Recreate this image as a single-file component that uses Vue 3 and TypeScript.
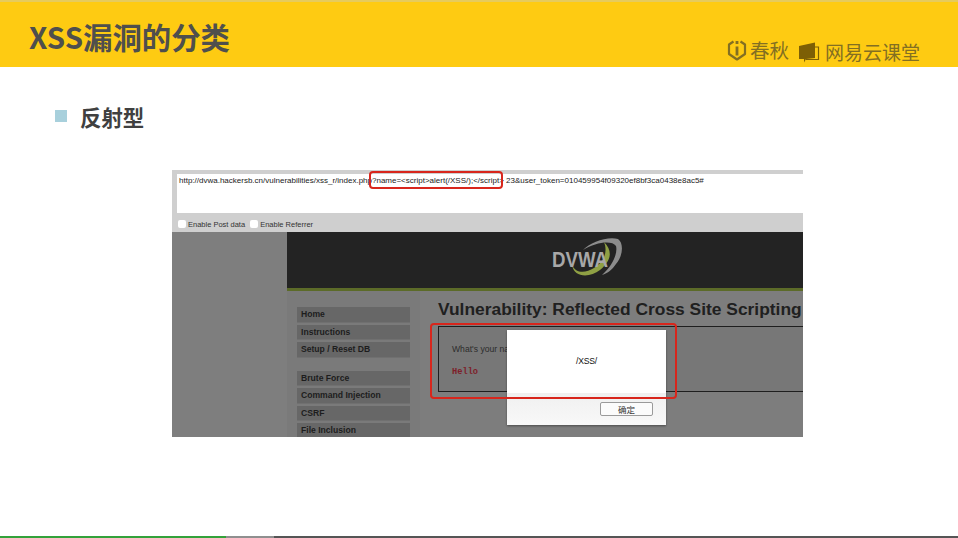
<template>
  <div class="slide">
    <header class="head">
      <h1 class="titulo">XSS漏洞的分类</h1>
      <div class="logos">
        <svg class="marca" width="20" height="22" viewBox="0 0 20 22">
          <path d="M6.5 2.5 L2 5.5 V15 L10 20.5 L18 15 V5.5 L13.5 2.5" fill="none" stroke="#836f22" stroke-width="2.2" stroke-linejoin="round" />
          <rect x="8.6" y="7.5" width="2.8" height="9" fill="#836f22" />
          <rect x="8.6" y="2" width="2.8" height="3" fill="#836f22" />
        </svg>
        <span class="chunqiu">春秋</span>
        <svg class="marca2" width="22" height="21" viewBox="0 0 22 21">
          <path d="M1 4 L17 0.5 V16 L8 17 L6 20.5 V17 L1 17 Z" fill="#7d5f05" />
          <path d="M17 5 H20.5 V17.5 H8" fill="none" stroke="#7d5f05" stroke-width="1.2" />
        </svg>
        <span class="netease">网易云课堂</span>
      </div>
    </header>

    <div class="item">
      <span class="bullet"></span>
      <span class="item-txt">反射型</span>
    </div>

    <section class="shot">
      <div class="url-wrap">
        <div class="url">http://dvwa.hackersb.cn/vulnerabilities/xss_r/index.php?name=&lt;script&gt;alert(/XSS/);&lt;/script&gt;&nbsp;23&amp;user_token=010459954f09320ef8bf3ca0438e8ac5#</div>
      </div>
      <div class="opts">
        <span class="check"></span><span>Enable Post data</span>
        <span class="check"></span><span>Enable Referrer</span>
      </div>

      <div class="page">
        <div class="gutter"></div>
        <div class="dvwa">
          <div class="banner">
            <svg class="dvwa-logo" width="90" height="56" viewBox="0 0 90 56">
              <path d="M43 18 C50 10 68 4 78 7 C84 11 83 24 76 32 C72 38 68 41 62 43 C72 34 78 22 76 14 C72 8 56 10 43 18 Z" fill="#8c8c8c" />
              <path d="M32 33 C34 46 50 46 60 38 C70 30 74 20 64 10 C68 20 64 30 54 36 C46 41 36 42 32 33 Z" fill="#8fa044" />
              <text x="12" y="35" textLength="56" lengthAdjust="spacingAndGlyphs" class="dvwa-txt">DVWA</text>
            </svg>
          </div>
          <div class="cols">
            <nav class="menu">
              <div class="grupo">
                <div v-for="m in menu1" :key="m" class="menu-item">{{ m }}</div>
              </div>
              <div class="grupo">
                <div v-for="m in menu2" :key="m" class="menu-item">{{ m }}</div>
              </div>
            </nav>
            <div class="main">
              <h2 class="vuln">Vulnerability: Reflected Cross Site Scripting</h2>
              <div class="vuln-box">
                <div class="nome">What's your name?</div>
                <div class="hello">Hello</div>
              </div>
            </div>
          </div>
        </div>
      </div>

      <div class="mark mark-url"></div>
      <div class="dialog">
        <div class="dialog-msg">/XSS/</div>
        <div class="dialog-foot"><button class="ok">确定</button></div>
      </div>
      <div class="mark mark-box"></div>
    </section>

    <div class="progress">
      <span class="p-green"></span>
      <span class="p-gray"></span>
      <span class="p-dark"></span>
    </div>
  </div>
</template>

<script setup lang="ts">
const menu1: string[] = ["Home", "Instructions", "Setup / Reset DB"]
const menu2: string[] = ["Brute Force", "Command Injection", "CSRF", "File Inclusion"]
</script>

<style>
html,
body {
  margin: 0;
  background: #fff;
  overflow: hidden;
}
</style>

<style scoped>
.slide {
  width: 958px;
  height: 538px;
  display: flex;
  flex-direction: column;
  background: #fff;
  font-family: "Liberation Sans", "Noto Sans CJK SC", sans-serif;
}

.head {
  height: 65px;
  flex: none;
  border-top: 2px solid #e6cb5c;
  background: #fecb12;
  display: flex;
  justify-content: space-between;
  align-items: flex-end;
  padding: 0 38px 0 29px;
}

.titulo {
  margin: 0 0 11px;
  font-size: 29.4px;
  line-height: 40px;
  font-weight: 700;
  color: #4f4f4d;
  font-family: "Noto Sans CJK SC", sans-serif;
}

.logos {
  display: flex;
  align-items: center;
  margin-bottom: 0;
  color: #836f22;
}

.marca {
  margin-top: -4px;
}

.chunqiu {
  font-size: 19.5px;
  line-height: 30px;
  margin: -5px 9px 0 3px;
  font-family: "Noto Sans CJK SC", sans-serif;
  font-weight: 400;
}

.netease {
  font-size: 19px;
  line-height: 30px;
  margin-left: 5px;
  font-family: "Noto Sans CJK SC", sans-serif;
  font-weight: 400;
}

.item {
  margin: 33px 0 0 55px;
  display: flex;
  align-items: center;
  height: 32px;
  flex: none;
}

.bullet {
  width: 12px;
  height: 12px;
  background: #a8d0dc;
}

.item-txt {
  margin-left: 13px;
  font-size: 21.4px;
  font-weight: 700;
  color: #404040;
  font-family: "Noto Sans CJK SC", sans-serif;
}

.shot {
  position: relative;
  width: 631px;
  height: 267px;
  flex: none;
  margin: 38px 0 0 172px;
  background: #cfcfcf;
  display: flex;
  flex-direction: column;
}

.url-wrap {
  height: 43px;
  padding-top: 4px;
  box-sizing: border-box;
  flex: none;
}

.url {
  height: 100%;
  box-sizing: border-box;
  background: #fff;
  font-size: 8px;
  line-height: 12px;
  padding: 1px 0 0 2px;
  color: #222;
  white-space: nowrap;
  overflow: hidden;
  margin-left: 5px;
}

.opts {
  height: 19px;
  flex: none;
  display: flex;
  align-items: center;
  font-size: 7.5px;
  color: #333;
  padding: 3px 0 0 6px;
  gap: 2px;
  box-sizing: border-box;
}

.check {
  width: 8px;
  height: 8px;
  background: #fff;
  border-radius: 2px;
}

.check + span {
  margin-right: 3px;
}

.page {
  flex: 1;
  min-height: 0;
  display: flex;
  background: #7e7e7e;
  overflow: hidden;
}

.gutter {
  width: 115px;
  flex: none;
}

.dvwa {
  flex: 1;
  min-width: 0;
  display: flex;
  flex-direction: column;
}

.banner {
  height: 56px;
  flex: none;
  background: #232323;
  border-bottom: 3px solid #5c6b28;
  display: flex;
  align-items: center;
  padding-left: 253px;
}

.dvwa-txt {
  font-family: "Liberation Sans", sans-serif;
  font-weight: 700;
  font-size: 22px;
  fill: #a8a8a8;
}

.cols {
  flex: 1;
  display: flex;
  min-height: 0;
}

.menu {
  width: 133px;
  flex: none;
  padding: 16px 0 0 10px;
  box-sizing: border-box;
  background: #7a7a7a;
}

.grupo {
  display: flex;
  flex-direction: column;
  gap: 2px;
  margin-bottom: 13px;
}

.menu-item {
  width: 113px;
  height: 15.5px;
  background: #676767;
  border-bottom: 1px solid #707070;
  font-size: 8.6px;
  font-weight: 700;
  line-height: 15px;
  color: #1d1d1d;
  padding-left: 4px;
  box-sizing: border-box;
}

.main {
  flex: 1;
  min-width: 0;
  background: #7d7d7d;
  padding: 0 0 0 17px;
}

.vuln {
  margin: 0;
  padding: 7px 0 0 1px;
  height: 35px;
  box-sizing: border-box;
  white-space: nowrap;
  font-size: 17.4px;
  line-height: 22px;
  font-weight: 700;
  color: #202020;
}

.vuln-box {
  border: solid #1e1e1e;
  border-width: 1px 0 1px 1px;
  margin-left: 1px;
  height: 66px;
  box-sizing: border-box;
  padding: 17px 0 0 13px;
  background: #777;
}

.nome {
  font-size: 8.6px;
  color: #2c2c2c;
}

.hello {
  margin-top: 13px;
  font-family: "Liberation Mono", monospace;
  font-size: 8.7px;
  font-weight: 700;
  color: #7e1f2a;
}

.mark {
  position: absolute;
  box-sizing: border-box;
  border: 2.5px solid #d8261c;
  border-radius: 4px;
}

.mark-url {
  left: 197px;
  top: 1px;
  width: 134px;
  height: 18px;
}

.mark-box {
  left: 258px;
  top: 153px;
  width: 247px;
  height: 76px;
}

.dialog {
  position: absolute;
  left: 335px;
  top: 160px;
  width: 159px;
  height: 95px;
  background: #fff;
  display: flex;
  flex-direction: column;
  box-shadow: 0 1px 2px rgba(0, 0, 0, 0.4);
}

.dialog-msg {
  height: 63px;
  box-sizing: border-box;
  padding-top: 26px;
  text-align: center;
  font-size: 8.6px;
  color: #111;
  letter-spacing: -0.2px;
}

.dialog-foot {
  flex: 1;
  background: linear-gradient(#f0f0f0, #f8f8f8);
  display: flex;
  justify-content: flex-end;
  padding: 9px 13px 0 0;
}

.ok {
  width: 53px;
  height: 14px;
  padding: 0;
  background: #fbfbfb;
  border: 1px solid #9a9a9a;
  border-radius: 2px;
  font-size: 8.5px;
  line-height: 12px;
  color: #333;
  font-family: "Noto Sans CJK SC", sans-serif;
}

.progress {
  margin-top: auto;
  height: 2px;
  flex: none;
  display: flex;
}

.p-green {
  width: 226px;
  background: #33a23a;
}

.p-gray {
  width: 48px;
  background: #8f8f8f;
}

.p-dark {
  flex: 1;
  background: #555;
}
</style>
